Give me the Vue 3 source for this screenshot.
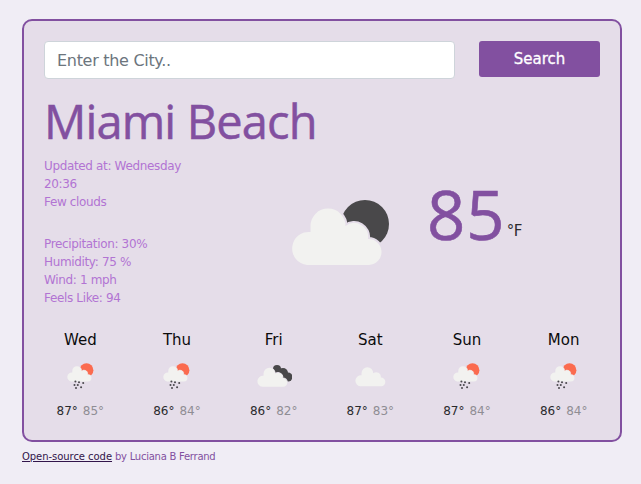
<script setup>
const forecast = [
  { day: 'Wed', icon: 'rain', high: 87, low: 85 },
  { day: 'Thu', icon: 'rain', high: 86, low: 84 },
  { day: 'Fri', icon: 'night', high: 86, low: 82 },
  { day: 'Sat', icon: 'cloud', high: 87, low: 83 },
  { day: 'Sun', icon: 'rain', high: 87, low: 84 },
  { day: 'Mon', icon: 'rain', high: 86, low: 84 },
]
const cloudPath = 'M16 65A16.5 16.5 0 0 1 19.5 32L19.5 26A17.5 17.5 0 0 1 54.5 26A14 14 0 0 1 77 39A13 13 0 0 1 78 65Z'
const rainDots = [
  [28, 62], [40, 64], [54, 67], [25, 73], [36, 73], [47, 81], [30, 83],
]
</script>

<template>
  <main class="page">
    <section class="weather-card">
      <form class="search" @submit.prevent>
        <input class="search__input" type="search" placeholder="Enter the City.." />
        <button class="search__button" type="button">Search</button>
      </form>

      <h1 class="city">Miami Beach</h1>

      <div class="current">
        <div class="current__info">
          <ul class="facts">
            <li>Updated at: Wednesday</li>
            <li>20:36</li>
            <li>Few clouds</li>
          </ul>
          <ul class="facts">
            <li>Precipitation: 30%</li>
            <li>Humidity: 75 %</li>
            <li>Wind: 1 mph</li>
            <li>Feels Like: 94</li>
          </ul>
        </div>
        <div class="current__now">
          <svg class="current__icon" viewBox="0 0 100 66" width="100" height="66">
            <circle cx="74" cy="24" r="24" fill="#49484a" />
            <path :d="cloudPath" fill="#f2f2f0" stroke="#e5dde9" stroke-width="4" paint-order="stroke" />
          </svg>
          <span class="current__temp">85</span>
          <span class="current__unit">°F</span>
        </div>
      </div>

      <div class="forecast">
        <article v-for="item in forecast" :key="item.day" class="forecast__day">
          <h2 class="forecast__name">{{ item.day }}</h2>
          <svg v-if="item.icon === 'rain'" class="forecast__icon" viewBox="0 0 90 90" width="27" height="27">
            <circle cx="65" cy="24" r="23" fill="#fb6b4f" />
            <path :d="cloudPath" transform="translate(0 3) scale(0.9)" fill="#f2f2f0" stroke="#e5dde9" stroke-width="2" paint-order="stroke" />
            <circle v-for="dot in rainDots" :key="dot.join()" :cx="dot[0]" :cy="dot[1]" r="3.4" fill="#4a484d" />
          </svg>
          <svg v-else-if="item.icon === 'night'" class="forecast__icon" viewBox="0 0 36 27" width="36" height="27">
            <g fill="#49484a">
              <circle cx="21" cy="6" r="4" />
              <circle cx="27" cy="10" r="5" />
              <circle cx="32" cy="14" r="4.5" />
            </g>
            <path :d="cloudPath" transform="translate(1 2) scale(0.335)" fill="#f2f2f0" stroke="#e5dde9" stroke-width="3" paint-order="stroke" />
          </svg>
          <svg v-else class="forecast__icon" viewBox="0 0 36 27" width="36" height="27">
            <path :d="cloudPath" transform="translate(3 1.5) scale(0.335)" fill="#f2f2f0" />
          </svg>
          <p class="forecast__temps">
            <span>{{ item.high }}°</span>
            <span class="forecast__low">{{ item.low }}°</span>
          </p>
        </article>
      </div>
    </section>
    <p class="credit"><a href="#">Open-source code</a> by Luciana B Ferrand</p>
  </main>
</template>

<style>
html,
body {
  margin: 0;
  background: #f0edf5;
}
</style>

<style scoped>
.page {
  height: 484px;
  overflow: hidden;
  padding: 19px 19px 0 22px;
  box-sizing: border-box;
  font-family: 'DejaVu Sans', 'Liberation Sans', sans-serif;
}

.weather-card {
  height: 423px;
  box-sizing: border-box;
  padding: 20px 20px 0;
  border: 2px solid #8250a0;
  border-radius: 10px;
  background: #e5dde9;
}

.search {
  display: flex;
  justify-content: space-between;
  align-items: flex-start;
}

.search__input {
  width: 411px;
  height: 38px;
  box-sizing: border-box;
  padding: 0 12px;
  border: 1px solid #ced4da;
  border-radius: 4px;
  background: #fff;
  font: 16px 'DejaVu Sans', sans-serif;
  letter-spacing: -0.3px;
}

.search__input::placeholder {
  color: #6c757d;
  opacity: 1;
}

.search__button {
  width: 121px;
  height: 36px;
  border: 0;
  border-radius: 3px;
  background: #8250a0;
  color: #fff;
  font: 15px 'DejaVu Sans', sans-serif;
  -webkit-text-stroke: 0.3px #fff;
}

.city {
  margin: 13px 0 0;
  font-family: 'Open Sans', 'DejaVu Sans', sans-serif;
  font-size: 47px;
  font-weight: 400;
  line-height: 58px;
  letter-spacing: -0.85px;
  color: #8250a0;
  -webkit-text-stroke: 0.5px #8250a0;
}

.current {
  display: grid;
  grid-template-columns: 247px 1fr;
  margin-top: 7px;
  align-items: start;
}

.facts {
  margin: 0 0 24px;
  padding: 0;
  list-style: none;
  font-size: 12px;
  line-height: 18px;
  letter-spacing: -0.35px;
  color: #b274d3;
}

.facts:last-child {
  margin-bottom: 0;
}

.current__now {
  display: flex;
  align-items: flex-start;
  margin-top: 25px;
}

.current__icon {
  margin-top: 18px;
}

.current__temp {
  margin-left: 36px;
  font-family: 'Open Sans', 'DejaVu Sans', sans-serif;
  font-size: 67px;
  line-height: 64px;
  letter-spacing: 1px;
  color: #8250a0;
  -webkit-text-stroke: 0.6px #8250a0;
}

.current__unit {
  margin: 40px 0 0 1px;
  font-size: 15px;
  letter-spacing: -0.5px;
  color: #2b2b2e;
}

.forecast {
  display: grid;
  grid-template-columns: repeat(6, 1fr);
  margin: 22px -12px 0;
}

.forecast__day {
  display: flex;
  flex-direction: column;
  align-items: center;
}

.forecast__name {
  margin: 0;
  font-size: 15px;
  font-weight: 400;
  line-height: 22px;
  color: #0b0b0c;
}

.forecast__icon {
  margin-top: 12px;
}

.forecast__temps {
  margin: 12px 0 0;
  font-size: 12px;
  line-height: 18px;
  color: #2b2b2e;
}

.forecast__low {
  margin-left: 5px;
  color: #8f8d94;
}

.credit {
  margin: 8px 0 0;
  font-size: 10px;
  line-height: 14px;
  letter-spacing: -0.25px;
  color: #8250a0;
}

.credit a {
  letter-spacing: -0.05px;
  color: #32154a;
}
</style>
